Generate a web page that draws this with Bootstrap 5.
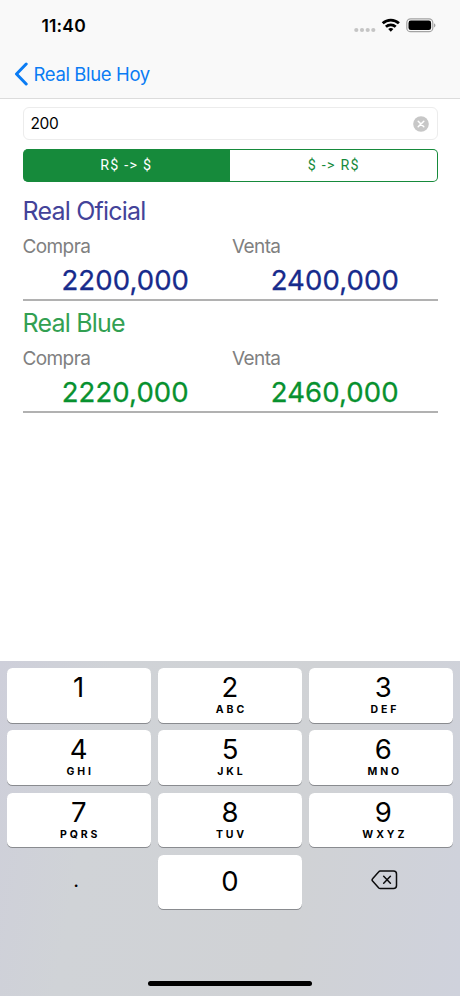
<!DOCTYPE html>
<html lang="es">
<head>
<meta charset="utf-8">
<meta name="viewport" content="width=device-width, initial-scale=1">
<title>Real Blue Hoy</title>
<link href="https://cdn.jsdelivr.net/npm/bootstrap@5.3.0/dist/css/bootstrap.min.css" rel="stylesheet">
<style>
body{font-family:Inter,"Liberation Sans",sans-serif;color:#000;background:#fff}
.screen{height:996px;overflow:hidden}
.top-area{height:99px;background:#f9f9f9;border-bottom:1px solid #dcdcdc}
.status-row{height:50px;padding:0 24px 0 41.5px}
.clock{font-size:17.5px;font-weight:600;line-height:50px;letter-spacing:.15px;padding-top:1px}
.back-link{height:48px;padding-left:14px;color:#0a7cf4;font-size:18.5px;letter-spacing:-.36px;line-height:48px}
.back-link svg{margin-right:4.5px}
.content-area{padding:8px 22.5px 0}
.amount-box{height:33px;border:1px solid #ececec;border-radius:6px;padding:0 8px 0 7px;font-size:15.5px;letter-spacing:-.4px}
.segments{height:33px;margin-top:9px;font-family:Roboto,sans-serif;font-size:14.3px;letter-spacing:1.25px}
.segment{color:#168a3b;border:1px solid #168a3b;border-left:0;border-radius:0 5px 5px 0;padding-left:1px}
.segment.active{background:#168a3b;color:#fff;border-radius:5px 0 0 5px}
.rate{height:112px;border-bottom:2px solid #b1b1b1}
.rate-first{margin-top:7px}
.rate-title{font-size:25px;line-height:44px;height:44px;letter-spacing:-.8px}
.rate-label{font-size:19px;line-height:28px;height:28px;color:#808080;letter-spacing:-.6px}
.rate-value{font-size:27.5px;font-weight:400;-webkit-text-stroke:.3px currentColor;line-height:38px;letter-spacing:.1px}
.official .rate-title{color:#434399}
.official .rate-value{color:#172b8c}
.blue .rate-title{color:#32a052}
.blue .rate-value{color:#08912f}
.keypad{height:335px;background:linear-gradient(100deg,#cecfda 0,#d0d3d7 22%,#d0d2d5 65%,#cfd2dc 100%);padding:7px 7px 0}
.keys{display:grid;grid-template-columns:repeat(3,1fr);grid-auto-rows:54.5px;gap:7.8px 6.5px}
.key{background:#fff;border-radius:5.5px;box-shadow:0 1px 0 #898b8f;padding-top:4px}
.key:nth-child(3n+1){padding-right:1px}
.key:nth-child(3n){padding-left:5px}
.digit{font-size:27.5px;line-height:30px;height:31px}
.letters{font-size:10.5px;font-weight:700;line-height:13px;letter-spacing:2.9px;padding-left:3px}
.key-zero{padding-top:11px}
.decimal-point{width:9px;height:34px;font-size:20px;line-height:30px;margin-right:6px}
.home-bar{width:164px;height:5px;border-radius:3px;background:#000;margin-top:72px}
</style>
<script src="https://cdn.jsdelivr.net/npm/bootstrap@5.3.0/dist/js/bootstrap.bundle.min.js"></script>
</head>
<body>
<div class="screen d-flex flex-column">
  <header class="top-area">
    <div class="status-row d-flex justify-content-between align-items-center">
      <span class="clock">11:40</span>
      <svg width="83" height="20" viewBox="353 15 83 20">
        <g fill="#c5c5c5"><circle cx="356.300" cy="30" r="2.100"/><circle cx="362" cy="30" r="2.100"/><circle cx="367.700" cy="30" r="2.100"/><circle cx="373.300" cy="30" r="2.100"/></g>
        <g fill="none" stroke="#000" stroke-width="2.800"><path d="M382.700 23.200a12 12 0 0 1 16.200 0"/><path d="M385.900 26.700a7.300 7.300 0 0 1 9.800 0"/></g>
        <path d="M390.800 31.700l-2.600-2.600a3.800 3.800 0 0 1 5.200 0z"/>
        <rect x="406.800" y="18.900" width="26" height="12.800" rx="3.800" fill="none" stroke="#a3a3a3" stroke-width="1.200"/>
        <rect x="408.500" y="20.600" width="22.600" height="9.400" rx="2.300"/>
        <path d="M434 23.200c2 .8 2 3.400 0 4.200z" fill="#a3a3a3"/>
      </svg>
    </div>
    <div class="back-link d-flex align-items-center">
      <svg width="15" height="24" viewBox="0 0 15 24" fill="none" stroke="#0a7cf4" stroke-width="3" stroke-linecap="round" stroke-linejoin="round"><path d="M12.200 2L2.500 12l9.700 10"/></svg>
      <span>Real Blue Hoy</span>
    </div>
  </header>
  <main class="content-area flex-grow-1">
    <div class="amount-box d-flex align-items-center justify-content-between">
      <span>200</span>
      <svg width="16" height="16" viewBox="0 0 16 16"><circle cx="8" cy="8" r="7.800" fill="#c7c7c7"/><path d="M5.200 5.200l5.600 5.600M10.800 5.200l-5.600 5.600" stroke="#fff" stroke-width="1.500" stroke-linecap="round"/></svg>
    </div>
    <div class="segments d-flex text-center">
      <div class="segment active w-50 d-flex align-items-center justify-content-center">R$ -&gt; $</div>
      <div class="segment w-50 d-flex align-items-center justify-content-center">$ -&gt; R$</div>
    </div>
    <section class="rate rate-first official">
      <div class="rate-title">Real Oficial</div>
      <div class="row g-0">
        <div class="col"><div class="rate-label">Compra</div><div class="rate-value text-center">2200,000</div></div>
        <div class="col ps-1"><div class="rate-label">Venta</div><div class="rate-value text-center">2400,000</div></div>
      </div>
    </section>
    <section class="rate blue">
      <div class="rate-title">Real Blue</div>
      <div class="row g-0">
        <div class="col"><div class="rate-label">Compra</div><div class="rate-value text-center">2220,000</div></div>
        <div class="col ps-1"><div class="rate-label">Venta</div><div class="rate-value text-center">2460,000</div></div>
      </div>
    </section>
  </main>
  <footer class="keypad">
    <div class="keys text-center">
      <div class="key"><div class="digit">1</div></div>
      <div class="key"><div class="digit">2</div><div class="letters">ABC</div></div>
      <div class="key"><div class="digit">3</div><div class="letters">DEF</div></div>
      <div class="key"><div class="digit">4</div><div class="letters">GHI</div></div>
      <div class="key"><div class="digit">5</div><div class="letters">JKL</div></div>
      <div class="key"><div class="digit">6</div><div class="letters">MNO</div></div>
      <div class="key"><div class="digit">7</div><div class="letters">PQRS</div></div>
      <div class="key"><div class="digit">8</div><div class="letters">TUV</div></div>
      <div class="key"><div class="digit">9</div><div class="letters">WXYZ</div></div>
      <div class="d-flex align-items-center justify-content-center"><span class="decimal-point">.</span></div>
      <div class="key key-zero"><div class="digit">0</div></div>
      <div class="d-flex align-items-center justify-content-center ps-2 pb-1">
        <svg width="28" height="22" viewBox="0 0 28 22" fill="none" stroke="#0c0c0c" stroke-width="1.500" stroke-linejoin="round" stroke-linecap="round"><path d="M9.200 2h13.300a3 3 0 0 1 3 3v11.500a3 3 0 0 1-3 3H9.200a2 2 0 0 1-1.400-.6l-6-6.600a2 2 0 0 1 0-2.800l6-6.700A2 2 0 0 1 9.200 2zM12.700 7.300l6.700 6.900M19.400 7.300l-6.700 6.900"/></svg>
      </div>
    </div>
    <div class="home-bar mx-auto"></div>
  </footer>
</div>
</body>
</html>
